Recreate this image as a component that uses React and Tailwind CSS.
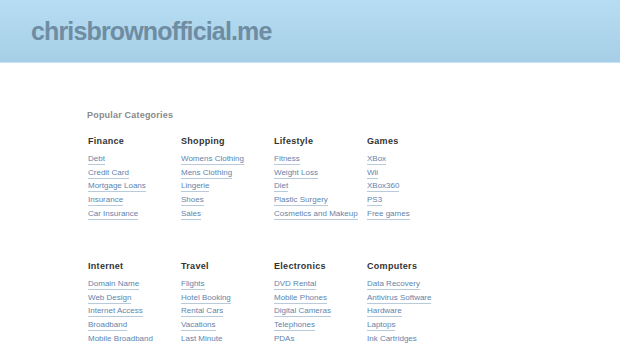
const groups = [
  [
    { title: 'Finance', links: ['Debt', 'Credit Card', 'Mortgage Loans', 'Insurance', 'Car Insurance'] },
    { title: 'Shopping', links: ['Womens Clothing', 'Mens Clothing', 'Lingerie', 'Shoes', 'Sales'] },
    { title: 'Lifestyle', links: ['Fitness', 'Weight Loss', 'Diet', 'Plastic Surgery', 'Cosmetics and Makeup'] },
    { title: 'Games', links: ['XBox', 'Wii', 'XBox360', 'PS3', 'Free games'] },
  ],
  [
    { title: 'Internet', links: ['Domain Name', 'Web Design', 'Internet Access', 'Broadband', 'Mobile Broadband'] },
    { title: 'Travel', links: ['Flights', 'Hotel Booking', 'Rental Cars', 'Vacations', 'Last Minute'] },
    { title: 'Electronics', links: ['DVD Rental', 'Mobile Phones', 'Digital Cameras', 'Telephones', 'PDAs'] },
    { title: 'Computers', links: ['Data Recovery', 'Antivirus Software', 'Hardware', 'Laptops', 'Ink Cartridges'] },
  ],
];

function Category({ title, links }) {
  return (
    <div className="w-[93px] shrink-0">
      <h4 className="h-[12px] text-[9px] font-bold text-[#333] leading-[12px] tracking-[0.3px] mb-[2px]">{title}</h4>
      <ul className="flex flex-col">
        {links.map((l) => (
          <li key={l} className="h-[13.7px] leading-[13px] whitespace-nowrap">
            <a href="#" className="text-[8px] text-[#5f84ac] border-b border-[#b9cadb] pb-[1px]">
              {l}
            </a>
          </li>
        ))}
      </ul>
    </div>
  );
}

export default function App() {
  return (
    <div className="w-[620px] h-[343px] overflow-hidden bg-white font-['Liberation_Sans',Arial,sans-serif]">
      <header className="h-[63px] bg-gradient-to-b from-[#b6ddf3] to-[#a6cee6] border-b border-[#c6e4f6] flex items-center px-[31px]">
        <h1 className="text-[25px] font-bold text-[#6e8ca2] tracking-[-0.85px] leading-none mt-[1px]">chrisbrownofficial.me</h1>
      </header>
      <main className="pl-[87px] pt-[46px]">
        <h2 className="h-[12px] text-[9px] leading-[12px] font-bold text-[#8a8a8a] tracking-[0.2px] mb-[14px]">Popular Categories</h2>
        <div className="flex flex-col gap-[42.5px] pl-[1px]">
          {groups.map((row, i) => (
            <div key={i} className="flex">
              {row.map((c) => (
                <Category key={c.title} {...c} />
              ))}
            </div>
          ))}
        </div>
      </main>
    </div>
  );
}
